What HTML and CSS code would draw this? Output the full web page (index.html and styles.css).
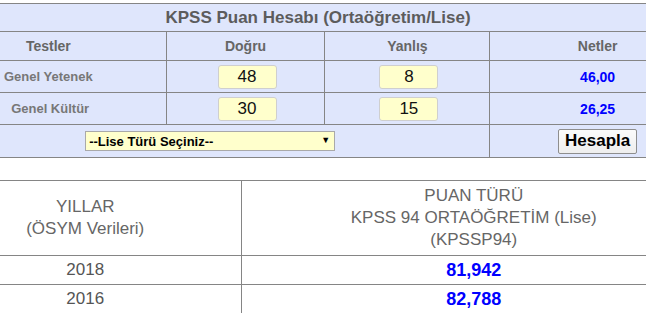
FILE: index.html
```html
<!DOCTYPE html>
<html>
<head>
	<title>KPSS Puan Hesabı</title>
	<link rel="stylesheet" href="styles.css">
</head>
<body>
	<div class="page">

		<!-- Hesaplama tablosu -->
		<table class="hesap">
			<colgroup>
				<col class="c-test">
				<col class="c-dogru">
				<col class="c-yanlis">
				<col class="c-net">
			</colgroup>
			<tr class="baslik-row">
				<td colspan="4" class="baslik">KPSS Puan Hesabı (Ortaöğretim/Lise)</td>
			</tr>
			<tr class="head-row">
				<th>Testler</th>
				<th>Doğru</th>
				<th>Yanlış</th>
				<th>Netler</th>
			</tr>
			<tr class="test-row">
				<td class="test-ad">Genel Yetenek</td>
				<td><input class="sayi" type="text" value="48"></td>
				<td><input class="sayi" type="text" value="8"></td>
				<td class="net">46,00</td>
			</tr>
			<tr class="test-row">
				<td class="test-ad">&nbsp;Genel Kültür</td>
				<td><input class="sayi" type="text" value="30"></td>
				<td><input class="sayi" type="text" value="15"></td>
				<td class="net">26,25</td>
			</tr>
			<tr class="alt-row">
				<td colspan="3">
					<span class="secim">
						<select class="lise">
							<option>--Lise Türü Seçiniz--</option>
						</select>
					</span>
				</td>
				<td><button class="hesapla">Hesapla</button></td>
			</tr>
		</table>

		<!-- ÖSYM sonuçları -->
		<table class="sonuc">
			<colgroup>
				<col class="c-yil">
				<col class="c-puan">
			</colgroup>
			<tr class="sonuc-head">
				<td>YILLAR<br>(ÖSYM Verileri)</td>
				<td>PUAN TÜRÜ<br>KPSS 94 ORTAÖĞRETİM (Lise)<br>(KPSSP94)</td>
			</tr>
			<tr class="sonuc-row">
				<td>2018</td>
				<td class="puan">81,942</td>
			</tr>
			<tr class="sonuc-row">
				<td>2016</td>
				<td class="puan">82,788</td>
			</tr>
		</table>

	</div>
</body>
</html>
```

FILE: styles.css
```css
/* Genel */
* {
	box-sizing: border-box;
}

body {
	margin: 0;
	overflow: hidden;
	font-family: "Liberation Sans", Arial, sans-serif;
	background-color: #ffffff;
}

/* Sayfa sola taşıyor (kırpılmış görüntü) */
.page {
	width: 776px;
	margin-left: -70px;
	padding-top: 3px;
}

/* Hesap tablosu */
.hesap {
	width: 100%;
	border-collapse: collapse;
	background-color: #dfe6fc;
}

.hesap td, .hesap th {
	border: 1px solid #858585;
	padding: 0;
	text-align: center;
	vertical-align: middle;
}

.c-test { width: 236px; }
.c-dogru { width: 159px; }
.c-yanlis { width: 165px; }
.c-net { width: 216px; }

.baslik-row td {
	height: 28px;
	font-size: 17px;
	font-weight: bold;
	color: #5c5c5c;
}

.head-row th {
	height: 29px;
	font-size: 14px;
	color: #666666;
}

.test-row td {
	height: 32px;
}

.test-ad {
	font-size: 13px;
	font-weight: bold;
	color: #777777;
}

.net {
	font-size: 14px;
	font-weight: bold;
	color: #0000ff;
}

/* Doğru / yanlış kutuları */
.sayi {
	width: 59px;
	height: 24px;
	margin: 0 0 0 3px;
	padding: 0;
	border: 1px solid #cfcfcf;
	border-radius: 3px;
	background-color: #ffffcc;
	font-family: "Liberation Sans", Arial, sans-serif;
	font-size: 17px;
	color: #111111;
	text-align: center;
}

.alt-row td {
	height: 33px;
}

/* Lise seçimi */
.secim {
	position: relative;
	display: inline-block;
	vertical-align: middle;
}

.lise {
	appearance: none;
	-webkit-appearance: none;
	display: block;
	width: 250px;
	height: 20px;
	margin: 0;
	padding: 0 0 0 3px;
	border: 1px solid #a9a9a9;
	border-radius: 0;
	background-color: #ffffcc;
	font-family: "Liberation Sans", Arial, sans-serif;
	font-size: 13px;
	font-weight: bold;
	color: #000000;
}

.secim::after {
	content: "\25BC";
	position: absolute;
	right: 5px;
	top: 4px;
	font-size: 9px;
	color: #000000;
	pointer-events: none;
}

.hesapla {
	width: 79px;
	height: 25px;
	margin: 0;
	padding: 0;
	border: 1px solid #8e8e8e;
	border-radius: 2px;
	background: linear-gradient(#fbfbfb, #eeeeee);
	font-family: "Liberation Sans", Arial, sans-serif;
	font-size: 17px;
	font-weight: bold;
	color: #000000;
	vertical-align: middle;
}

/* Sonuç tablosu */
.sonuc {
	width: 100%;
	margin-top: 22px;
	border-collapse: collapse;
}

.sonuc td {
	border-top: 1px solid #858585;
	border-bottom: 1px solid #858585;
	padding: 0;
	text-align: center;
	vertical-align: middle;
	font-size: 17px;
	color: #666666;
}

.sonuc td + td {
	border-left: 1px solid #858585;
}

.c-yil { width: 311px; }
.c-puan { width: 465px; }

.sonuc-head td {
	height: 75px;
	line-height: 22px;
}

.sonuc-row td {
	height: 29px;
	color: #555555;
}

.sonuc-row .puan {
	font-size: 18px;
	font-weight: bold;
	color: #0000ff;
}
```
